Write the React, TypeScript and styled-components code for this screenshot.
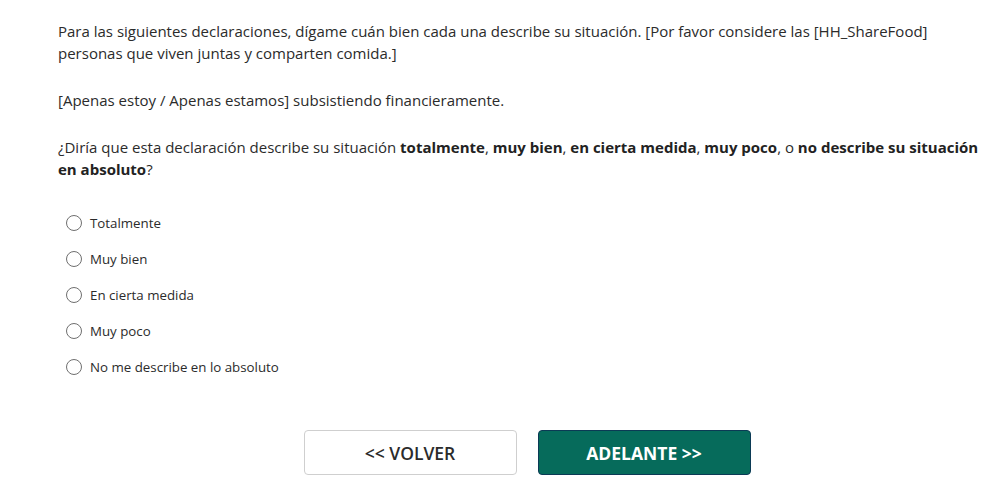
import { createGlobalStyle } from "styled-components";
import styled from "styled-components";

const GlobalStyle = createGlobalStyle`
  html, body {
    margin: 0;
    padding: 0;
    background: #ffffff;
    overflow: hidden;
  }
  body {
    font-family: "Open Sans", "Noto Sans", "Liberation Sans", sans-serif;
    color: #2b2b2b;
  }
`;

const options = [
  "Totalmente",
  "Muy bien",
  "En cierta medida",
  "Muy poco",
  "No me describe en lo absoluto",
];

const App = () => {
  return (
    <>
      <GlobalStyle />
      <Page>
        <Question>
          <Para>
            Para las siguientes declaraciones, dígame cuán bien cada una describe su situación.
            [Por favor considere las [HH_ShareFood] personas que viven juntas y comparten comida.]
          </Para>
          <Para>[Apenas estoy / Apenas estamos] subsistiendo financieramente.</Para>
          <Para>
            ¿Diría que esta declaración describe su situación <b>totalmente</b>,{" "}
            <b>muy bien</b>, <b>en cierta medida</b>, <b>muy poco</b>, o{" "}
            <b>no describe su situación en absoluto</b>?
          </Para>
        </Question>
        <OptionList>
          {options.map((o) => (
            <Option key={o}>
              <Radio type="radio" name="answer" />
              <span>{o}</span>
            </Option>
          ))}
        </OptionList>
        <ButtonRow>
          <BackBtn>&lt;&lt; VOLVER</BackBtn>
          <NextBtn>ADELANTE &gt;&gt;</NextBtn>
        </ButtonRow>
      </Page>
    </>
  );
};

export default App;

const Page = styled.div`
  width: 928px;
  padding: 20px 0 0 58px;
  display: flex;
  flex-direction: column;
`;

const Question = styled.div`
  display: flex;
  flex-direction: column;
  gap: 25px;
  font-size: 15px;
  line-height: 22px;
`;

const Para = styled.p`
  margin: 0;

  & b {
    font-weight: 700;
    color: #222;
  }
`;

const OptionList = styled.div`
  margin-top: 31px;
  display: flex;
  flex-direction: column;
  gap: 12px;
`;

const Option = styled.label`
  display: flex;
  align-items: center;
  gap: 8px;
  height: 24px;
  padding-left: 8px;
  font-size: 13.3px;
  color: #2b2b2b;
`;

const Radio = styled.input`
  appearance: none;
  margin: 0;
  width: 16px;
  height: 16px;
  border: 1px solid #6f6f6f;
  border-radius: 50%;
  background: #fff;
`;

const ButtonRow = styled.div`
  margin-top: 51px;
  padding-left: 10px;
  display: flex;
  justify-content: center;
  gap: 21px;
`;

const BaseBtn = styled.button`
  width: 213px;
  height: 45px;
  border-radius: 4px;
  font-family: "Open Sans", "Noto Sans", sans-serif;
  font-size: 17.5px;
  font-weight: 600;
  cursor: pointer;
`;

const BackBtn = styled(BaseBtn)`
  background: #ffffff;
  border: 1px solid #cfcfcf;
  color: #2b2b2b;
`;

const NextBtn = styled(BaseBtn)`
  background: #066b5b;
  border: 1px solid #0b3a55;
  color: #ffffff;
  font-weight: 700;
`;
